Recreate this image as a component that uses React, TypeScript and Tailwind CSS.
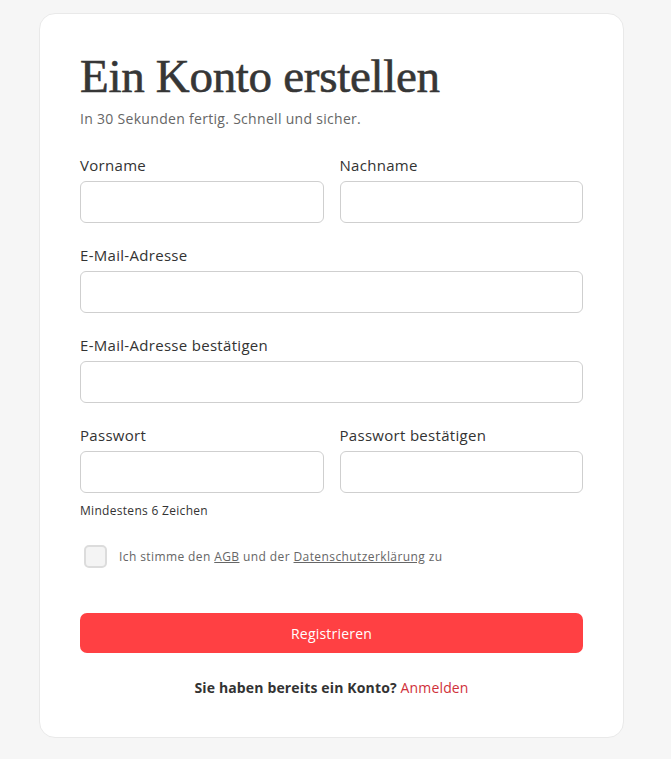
import React from "react";

function Field({ label, className = "" }: { label: string; className?: string }) {
  return (
    <div className={"flex flex-col " + className}>
      <label className="text-[15px] leading-[20px] tracking-[0.3px] text-[#333333] mb-[6px]">{label}</label>
      <input className="h-[42px] w-full rounded-[6px] border border-[#cfcfcf] bg-white px-3 outline-none" />
    </div>
  );
}

export default function App() {
  return (
    <div
      className="min-h-[759px] w-full bg-[#f6f6f6] pt-[13px] pb-[21px]"
      style={{ fontFamily: '"Open Sans", "Liberation Sans", sans-serif' }}
    >
      <div className="ml-[39px] w-[585px] rounded-[16px] border border-[#e9e9e9] bg-white px-[40px] pt-[38px] pb-[39px]">
        <h1
          className="text-[47px] leading-[48px] text-[#363636] tracking-[-0.3px] [-webkit-text-stroke:0.6px_#363636]"
          style={{ fontFamily: '"Liberation Serif", "DejaVu Serif", serif' }}
        >
          Ein Konto erstellen
        </h1>
        <p className="mt-[8px] text-[14px] leading-[21px] tracking-[0.3px] text-[#666666]">
          In 30 Sekunden fertig. Schnell und sicher.
        </p>

        <div className="mt-[26px] flex flex-col gap-[22px]">
          <div className="grid grid-cols-2 gap-[16px]">
            <Field label="Vorname" />
            <Field label="Nachname" />
          </div>
          <Field label="E-Mail-Adresse" />
          <Field label="E-Mail-Adresse bestätigen" />
          <div>
            <div className="grid grid-cols-2 gap-[16px]">
              <Field label="Passwort" />
              <Field label="Passwort bestätigen" />
            </div>
            <p className="mt-[10px] text-[12px] leading-[16px] tracking-[0.3px] text-[#333333]">Mindestens 6 Zeichen</p>
          </div>
        </div>

        <div className="mt-[26px] flex items-center gap-[12px] pl-[4px]">
          <div className="h-[23px] w-[23px] rounded-[5px] border-2 border-[#dcdcdc] bg-[#f4f4f4]" />
          <span className="text-[12px] leading-[16px] tracking-[0.4px] text-[#666666]">
            Ich stimme den <span className="underline">AGB</span> und der{" "}
            <span className="underline">Datenschutzerklärung</span> zu
          </span>
        </div>

        <button className="mt-[45px] h-[40px] w-full rounded-[7px] bg-[#ff4043] text-[14px] tracking-[0.2px] text-white">
          Registrieren
        </button>

        <p className="mt-[24px] text-center text-[14px] leading-[21px] tracking-[0.15px]">
          <span className="font-bold text-[#333333]">Sie haben bereits ein Konto?</span>{" "}
          <span className="text-[#d0313a]">Anmelden</span>
        </p>
      </div>
    </div>
  );
}
